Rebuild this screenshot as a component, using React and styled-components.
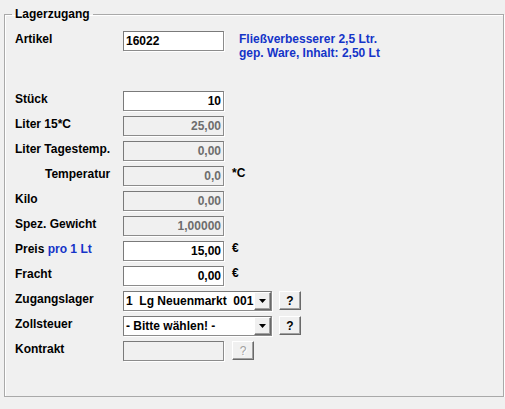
import React from 'react';
import styled, { createGlobalStyle } from 'styled-components';

const GlobalStyle = createGlobalStyle`
  html, body {
    margin: 0;
    background: #f0f0f0;
  }
  body {
    font-family: "Liberation Sans", Arial, sans-serif;
    font-size: 12px;
    font-weight: bold;
    color: #000;
  }
`;

const GroupBox = styled.fieldset`
  box-sizing: border-box;
  width: 500px;
  height: 390px;
  margin: 7px 0 0 4px;
  padding: 10px 10px 0 10px;
  border: 1px solid #a9a9a9;
  box-shadow: 1px 1px 0 #fff, inset 1px 1px 0 #fff;
  min-width: 0;
`;

const Legend = styled.legend`
  margin-left: -3px;
  padding: 0 3px;
  line-height: 14px;
`;

const Form = styled.div`
  display: flex;
  flex-direction: column;
  gap: 5px;
`;

const Row = styled.div`
  display: flex;
  align-items: flex-start;
  height: 20px;
  margin-bottom: ${p => p.$after || 0}px;
`;

const Label = styled.div`
  width: ${p => 108 - (p.$indent || 0)}px;
  padding-left: ${p => p.$indent || 0}px;
  padding-top: 1px;
  line-height: 14px;
  white-space: nowrap;
`;

const Hint = styled.span`
  color: #1434c8;
`;

const Field = styled.div`
  box-sizing: border-box;
  width: 101px;
  height: 20px;
  border: 1px solid #7a7a7a;
  border-right-color: #8c8c8c;
  border-bottom-color: #8c8c8c;
  box-shadow: 1px 1px 0 #fff;
  background: ${p => (p.$disabled ? '#f0f0f0' : '#fff')};
  color: ${p => (p.$disabled ? '#6d6d6d' : '#000')};
  text-align: ${p => (p.$left ? 'left' : 'right')};
  padding: 0 2px;
  line-height: 18px;
  white-space: nowrap;
  overflow: hidden;
`;

const Unit = styled.div`
  margin-left: 8px;
  line-height: 14px;
`;

const Description = styled.div`
  margin-left: 15px;
  padding-top: 1px;
  color: #1434c8;
  line-height: 14px;
`;

const Combo = styled.div`
  box-sizing: border-box;
  width: 149px;
  height: 20px;
  display: flex;
  border: 1px solid #7a7a7a;
  border-right-color: #8c8c8c;
  border-bottom-color: #8c8c8c;
  box-shadow: 1px 1px 0 #fff;
  background: #fff;
`;

const ComboText = styled.div`
  flex: 1;
  min-width: 0;
  padding-left: 2px;
  line-height: 18px;
  white-space: pre;
`;

const ComboArrow = styled.div`
  box-sizing: border-box;
  width: 17px;
  height: 18px;
  display: flex;
  align-items: center;
  justify-content: center;
  background: #f0f0f0;
  border: 1px solid;
  border-color: #fff #696969 #696969 #fff;
  box-shadow: inset -1px -1px 0 #a0a0a0;
`;

const HelpButton = styled.div`
  box-sizing: border-box;
  width: 22px;
  height: 19px;
  margin-left: ${p => p.$gap || 7}px;
  display: flex;
  align-items: center;
  justify-content: center;
  background: #f0f0f0;
  border: 1px solid;
  border-color: #fff #696969 #696969 #fff;
  box-shadow: inset -1px -1px 0 #a0a0a0;
  color: ${p => (p.$disabled ? '#a0a0a0' : '#000')};
  font-weight: ${p => (p.$disabled ? 'normal' : 'bold')};
  text-shadow: ${p => (p.$disabled ? '1px 1px 0 #fff' : 'none')};
`;

const Arrow = () => (
  <svg width="7" height="4" viewBox="0 0 7 4">
    <path d="M0 0h7L3.5 4z" fill="#000" />
  </svg>
);

const valueRows = [
  { label: 'Stück', value: '10' },
  { label: 'Liter 15*C', value: '25,00', disabled: true },
  { label: 'Liter Tagestemp.', value: '0,00', disabled: true },
  { label: 'Temperatur', value: '0,0', disabled: true, indent: 30, unit: '*C' },
  { label: 'Kilo', value: '0,00', disabled: true },
  { label: 'Spez. Gewicht', value: '1,00000', disabled: true },
  { label: 'Preis', hint: 'pro 1 Lt', value: '15,00', unit: '€' },
  { label: 'Fracht', value: '0,00', unit: '€' },
];

const App = () => {
  return (
    <>
      <GlobalStyle />
      <GroupBox>
        <Legend>Lagerzugang</Legend>
        <Form>
          <Row $after={35}>
            <Label>Artikel</Label>
            <Field $left>16022</Field>
            <Description>
              Fließverbesserer 2,5 Ltr.
              <br />
              gep. Ware, Inhalt: 2,50 Lt
            </Description>
          </Row>
          {valueRows.map(r => (
            <Row key={r.label}>
              <Label $indent={r.indent}>
                {r.label}
                {r.hint && <Hint> {r.hint}</Hint>}
              </Label>
              <Field $disabled={r.disabled}>{r.value}</Field>
              {r.unit && <Unit>{r.unit}</Unit>}
            </Row>
          ))}
          <Row>
            <Label>Zugangslager</Label>
            <Combo>
              <ComboText>{'1  Lg Neuenmarkt  001'}</ComboText>
              <ComboArrow><Arrow /></ComboArrow>
            </Combo>
            <HelpButton>?</HelpButton>
          </Row>
          <Row>
            <Label>Zollsteuer</Label>
            <Combo>
              <ComboText>- Bitte wählen! -</ComboText>
              <ComboArrow><Arrow /></ComboArrow>
            </Combo>
            <HelpButton>?</HelpButton>
          </Row>
          <Row>
            <Label>Kontrakt</Label>
            <Field $disabled />
            <HelpButton $disabled $gap={8}>?</HelpButton>
          </Row>
        </Form>
      </GroupBox>
    </>
  );
};

export default App;
